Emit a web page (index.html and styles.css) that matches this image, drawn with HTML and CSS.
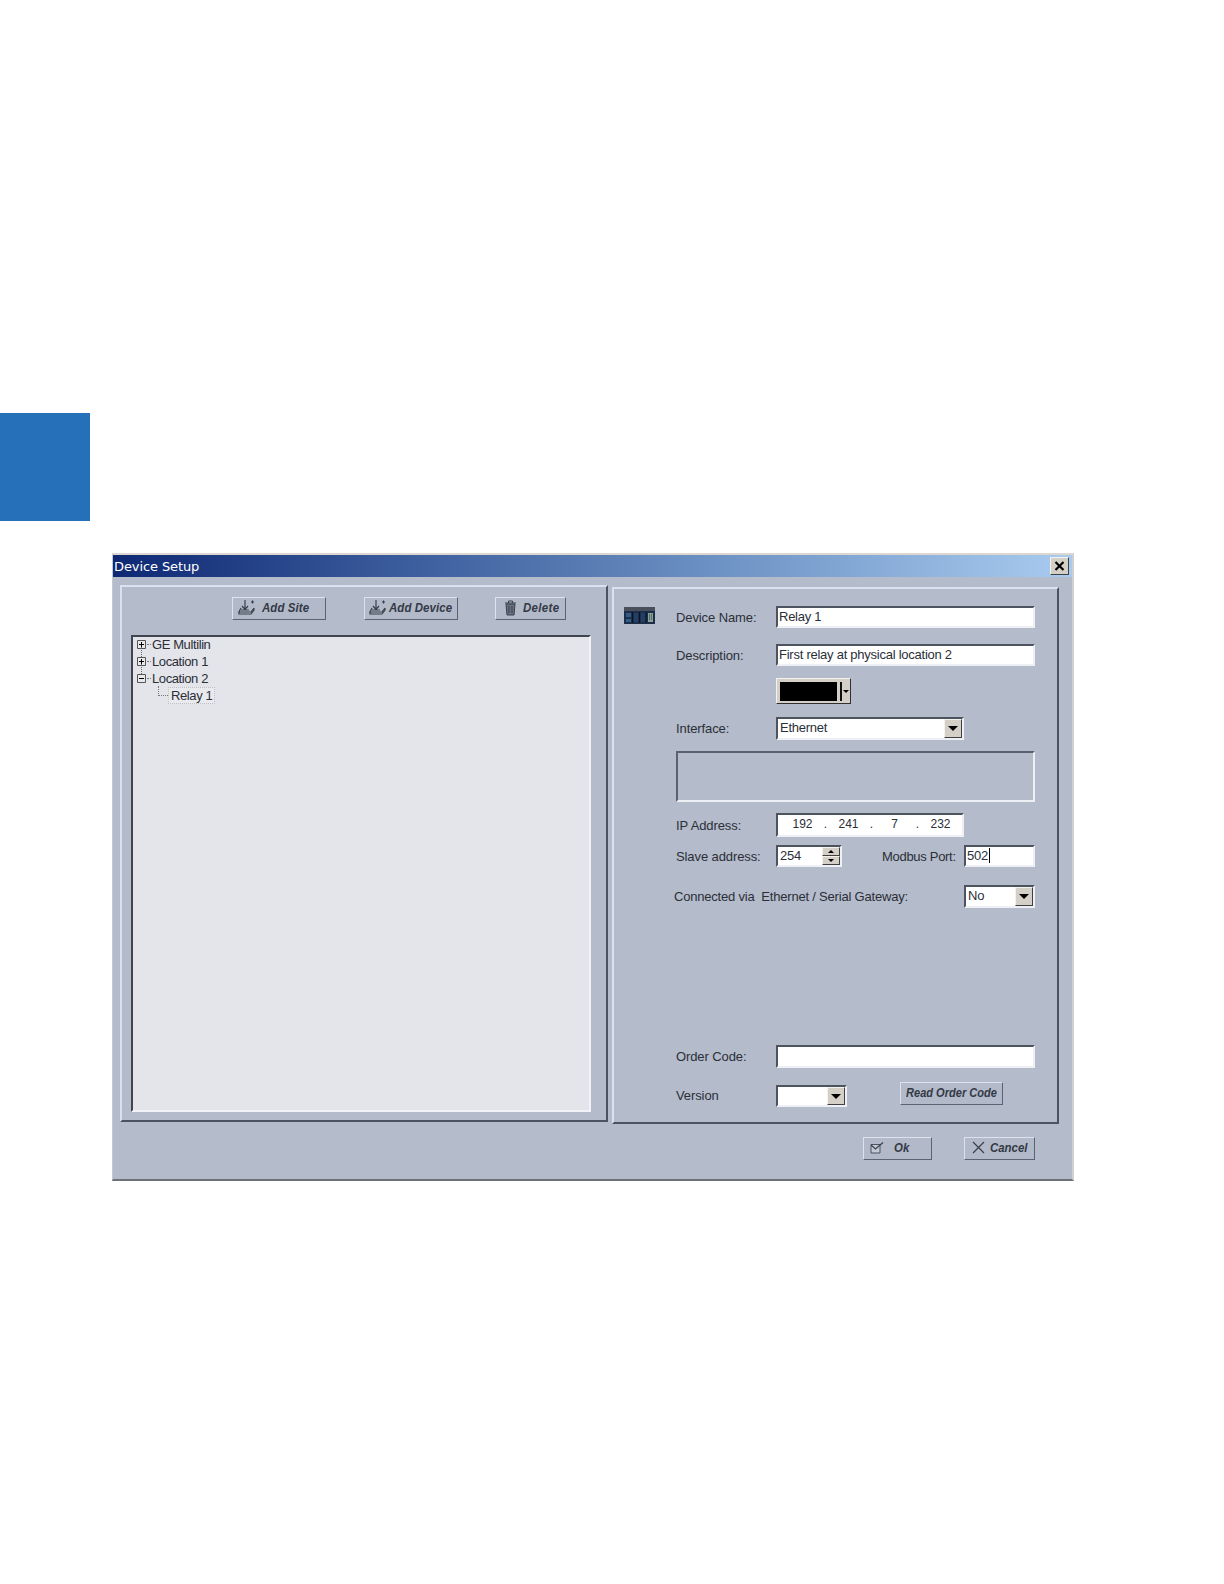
FILE: index.html
```html
<!DOCTYPE html>
<html lang="en">
<head>
<meta charset="utf-8">
<title>Device Setup</title>
<link rel="stylesheet" href="styles.css">
</head>
<body>
<div class="tab"></div>
<div class="window">
  <div class="titlebar">
    <span class="title">Device Setup</span>
    <span class="close"><svg width="11" height="10" viewBox="0 0 11 10"><path d="M1.500 1 L9.500 9 M9.500 1 L1.500 9" stroke="#000" stroke-width="2.200" fill="none"/></svg></span>
  </div>
  <div class="panels">
    <div class="panel left">
      <div class="toolbar">
        <button class="btn site"><svg class="ico" width="18" height="17" viewBox="0 0 18 17"><path d="M7 1V10M4 7L7 10.500L10 7M3 9L1 13H13L16 9M1 13V15H13L16 11V9M3 11H11M13 3H16M14.500 1.500V4.500" stroke="#39404c" stroke-width="1.200" fill="none"/></svg><span>Add Site</span></button>
        <button class="btn device"><svg class="ico" width="18" height="17" viewBox="0 0 18 17"><path d="M7 1V10M4 7L7 10.500L10 7M3 9L1 13H13L16 9M1 13V15H13L16 11V9M3 11H11M13 3H16M14.500 1.500V4.500" stroke="#39404c" stroke-width="1.200" fill="none"/></svg><span>Add Device</span></button>
        <button class="btn delete"><svg class="ico" width="13" height="16" viewBox="0 0 13 16"><path d="M2 4H11L10 15H3Z" fill="#6a7280" stroke="#39404c"/><path d="M1 3H12M4.500 3V1H8.500V3M5 6V13M8 6V13" stroke="#39404c" fill="none"/></svg><span>Delete</span></button>
      </div>
      <div class="tree">
        <div class="node first"><svg class="box" width="9" height="9" viewBox="0 0 9 9"><path d="M.5 .5H8.500V8.500H.5Z" fill="#e8e9ed" stroke="#555"/><path d="M2 4.500H7M4.500 2V7" stroke="#000"/></svg><i class="dots"></i><span>GE Multilin</span></div>
        <div class="node"><svg class="box" width="9" height="9" viewBox="0 0 9 9"><path d="M.5 .5H8.500V8.500H.5Z" fill="#e8e9ed" stroke="#555"/><path d="M2 4.500H7M4.500 2V7" stroke="#000"/></svg><i class="dots"></i><span>Location 1</span></div>
        <div class="node"><svg class="box" width="9" height="9" viewBox="0 0 9 9"><path d="M.5 .5H8.500V8.500H.5Z" fill="#e8e9ed" stroke="#555"/><path d="M2 4.500H7" stroke="#000"/></svg><i class="dots"></i><span>Location 2</span></div>
        <div class="leaf"><i class="elbow"></i><span class="selected">Relay 1</span></div>
      </div>
    </div>
    <div class="panel right">
      <div class="icon-col">
        <svg width="31" height="17" viewBox="0 0 31 17"><rect x="0" y="0" width="31" height="4" fill="#4a4f5b"/><rect x="0" y="4" width="31" height="13" fill="#1c2e4a"/><path d="M8.500 5V16M15.500 5V16M22 5V16" stroke="#0b1424"/><rect x="2" y="6" width="5" height="4" fill="#2f5c88"/><rect x="2" y="12" width="5" height="3" fill="#2f5c88"/><rect x="10" y="6" width="4" height="9" fill="#243f66"/><rect x="17" y="6" width="4" height="9" fill="#243f66"/><rect x="24" y="6" width="5" height="9" fill="#8aa596"/><path d="M25 8H28M25 10H28M25 12H28" stroke="#24323a" stroke-dasharray="1 1"/></svg>
      </div>
      <div class="form">
        <div class="row r-name"><label class="label">Device Name:</label><div class="field wide">Relay 1</div></div>
        <div class="row r-desc"><label class="label">Description:</label><div class="field wide">First relay at physical location 2</div></div>
        <div class="row r-color"><span class="label"></span><div class="colorpick"><span class="swatch"></span><span class="bar"></span><span class="tri small"></span></div></div>
        <div class="row r-iface"><label class="label">Interface:</label><div class="field combo iface"><span>Ethernet</span><span class="drop"><span class="tri"></span></span></div></div>
        <div class="group"></div>
        <div class="row r-ip"><label class="label">IP Address:</label><div class="field ip"><span>192</span><span>.</span><span>241</span><span>.</span><span>7</span><span>.</span><span>232</span></div></div>
        <div class="row r-slave"><label class="label">Slave address:</label><div class="field combo slave"><span>254</span><span class="spin"><span class="spinbtn"><span class="tri up"></span></span><span class="spinbtn"><span class="tri small"></span></span></span></div><label class="label port">Modbus Port:</label><div class="field short"><span class="caret">502</span></div></div>
        <div class="row r-gw"><label class="label gw">Connected via&nbsp; Ethernet / Serial Gateway:</label><div class="field combo short"><span>No</span><span class="drop"><span class="tri"></span></span></div></div>
        <div class="row r-order"><label class="label">Order Code:</label><div class="field wide"></div></div>
        <div class="row r-version"><label class="label">Version</label><div class="field combo version"><span></span><span class="drop"><span class="tri"></span></span></div><button class="btn read"><span>Read Order Code</span></button></div>
      </div>
    </div>
  </div>
  <div class="footer">
    <button class="btn ok"><svg class="ico" width="14" height="12" viewBox="0 0 14 12"><path d="M1 2.500H10V11H1Z" fill="#c3c9d5" stroke="#4d5463"/><path d="M1 3L5.500 7L13 .5" stroke="#39404c" stroke-width="1.200" fill="none"/></svg><span>Ok</span></button>
    <button class="btn cancel"><svg class="ico" width="13" height="13" viewBox="0 0 13 13"><path d="M1 1L12 12M12 1L1 12" stroke="#39404c" stroke-width="1.200" fill="none"/></svg><span>Cancel</span></button>
  </div>
</div>
</body>
</html>
```

FILE: styles.css
```css
* { box-sizing: border-box; }
html, body { margin: 0; padding: 0; background: #fff; }
body { width: 1224px; height: 1584px; overflow: hidden; font-family: "Liberation Sans", Arial, sans-serif; }

.tab { width: 90px; height: 108px; margin-top: 413px; background: #2570b9; }

.window {
  width: 962px; height: 628px; margin: 32px 0 0 112px;
  background: #b4bbca;
  border-top: 2px solid #dcd8d0;
  border-left: 1px solid #c4c8d0;
  border-right: 2px solid #d0d0d4;
  border-bottom: 2px solid #6f7278;
}

.titlebar {
  height: 22px; display: flex; align-items: center; justify-content: space-between;
  padding: 0 3px 0 1px;
  background: linear-gradient(90deg, #0e2874 0%, #3b5c9c 30%, #7095c6 65%, #a9cbf0 100%);
}
.title { font: 13px "DejaVu Sans", sans-serif; color: #fff; letter-spacing: -0.1px; }
.close {
  width: 19px; height: 18px; display: flex; align-items: center; justify-content: center;
  background: #d4d0c8;
  border: 1px solid; border-color: #f4f2ee #404040 #404040 #f4f2ee;
}

.panels { display: flex; height: 539px; margin-top: 8px; padding-left: 7px; }
.panel {
  border: 2px solid; border-color: #dbe2ef #4b5262 #4b5262 #dbe2ef;
}
.left { width: 488px; height: 537px; }
.right { width: 447px; height: 537px; margin: 2px 0 0 4px; display: flex; }

.toolbar { display: flex; padding: 10px 0 0 110px; }
.btn {
  display: flex; align-items: center; height: 23px; padding: 0 0 2px; margin: 0;
  background: #b2b9c9; color: #343a46;
  border: 1px solid; border-color: #dde2ec #5a6374 #5a6374 #dde2ec;
  font: italic bold 13px "Liberation Sans", sans-serif;
  white-space: nowrap;
}
.btn span { display: inline-block; transform: scaleX(.88); transform-origin: left center; letter-spacing: 0.1px; }
.ico { flex: none; }
.site { width: 94px; padding-left: 5px; }
.site span { margin-left: 6px; }
.device { width: 94px; margin-left: 38px; padding-left: 4px; }
.device span { margin-left: 2px; }
.delete { width: 71px; margin-left: 37px; padding-left: 8px; }
.delete span { margin-left: 6px; letter-spacing: 0.4px; }

.tree {
  width: 460px; height: 477px; margin: 15px 0 0 9px;
  background: #e3e5ea;
  border: 2px solid; border-color: #40454f #f2f3f6 #f2f3f6 #40454f;
  font-size: 13px; color: #2b2f38; letter-spacing: -0.4px; white-space: nowrap;
}
.node { position: relative; display: flex; align-items: center; height: 17px; padding-left: 4px; }
.first { margin-top: -1px; }
.node:not(.first)::before {
  content: ""; position: absolute; left: 8px; top: -6px; height: 10px;
  border-left: 1px dotted #666;
}
.box { flex: none; position: relative; }
.dots { width: 4px; margin: 0 1px; border-top: 1px dotted #777; }
.leaf { display: flex; align-items: center; height: 17px; padding-left: 25px; }
.elbow { width: 10px; height: 10px; margin-bottom: 9px; border-left: 1px dotted #777; border-bottom: 1px dotted #777; }
.selected { padding: 0 2px; height: 17px; line-height: 15px; width: 47px; border: 1px dotted #bdbfc5; background: #e9eaee; }

.icon-col { width: 62px; padding: 18px 0 0 10px; }
.form { width: 359px; display: flex; flex-direction: column; padding-top: 17px; font-size: 13px; color: #2b2f38; }

.row { display: flex; align-items: center; flex: none; }
.label { flex: none; width: 100px; letter-spacing: -0.1px; }
.r-name { height: 22px; }
.r-desc { height: 22px; margin-top: 16px; }
.r-color { height: 26px; margin-top: 12px; }
.r-iface { height: 23px; margin-top: 13px; }
.group {
  flex: none; height: 51px; margin-top: 11px;
  border: 2px solid; border-color: #5b616e #eef0f5 #eef0f5 #5b616e;
}
.r-ip { height: 24px; margin-top: 11px; }
.r-slave { height: 22px; margin-top: 8px; }
.r-gw { height: 23px; margin-top: 18px; }
.r-gw .label { width: 290px; margin-left: -2px; letter-spacing: -0.2px; }
.r-order { height: 23px; margin-top: auto; }
.r-version { height: 24px; margin: 17px 0 13px; align-items: flex-start; }

.field {
  flex: none; height: 100%; display: flex; align-items: center; padding: 0 0 2px 1px;
  background: #fff; color: #2b2f38; font-size: 13px; letter-spacing: -0.25px;
  border: 2px solid; border-color: #4d535f #eef0f5 #eef0f5 #4d535f;
}
.wide { width: 259px; }
.iface { width: 188px; }
.short { width: 71px; }
.slave { width: 66px; }
.version { width: 71px; height: 22px; }
.combo { justify-content: space-between; padding: 0 0 0 2px; }
.combo > span:first-child { padding-bottom: 2px; }
.ip { width: 188px; display: grid; grid-template-columns: repeat(7, 23px); padding-left: 13px; font-size: 12px; text-align: center; letter-spacing: 0; }
.port { width: 81px; margin-left: 40px; margin-right: 1px; letter-spacing: -0.3px; }
.caret { padding-right: 1px; border-right: 1px solid #000; line-height: 15px; }

.drop {
  flex: none; width: 18px; height: 100%; display: flex; align-items: center; justify-content: center;
  background: #d4d0c8; border: 1px solid; border-color: #f4f2ee #404040 #404040 #f4f2ee;
}
.tri { width: 0; height: 0; border: 5px solid transparent; border-top: 5px solid #000; border-bottom: 0; }
.tri.small { border-width: 3px 3px 0; border-top-color: #000; }
.tri.up { border-width: 0 3px 3px; border-bottom: 3px solid #000; border-top: 0; }

.spin { flex: none; width: 18px; height: 100%; display: flex; flex-direction: column; }
.spinbtn {
  flex: 1; display: flex; align-items: center; justify-content: center;
  background: #d4d0c8; border: 1px solid; border-color: #f4f2ee #404040 #404040 #f4f2ee;
}

.colorpick {
  width: 75px; height: 26px; display: flex; align-items: center; padding: 0 0 0 3px;
  background: #d4d0c8; border: 1px solid; border-color: #f4f2ee #303030 #303030 #f4f2ee;
}
.swatch { flex: none; width: 57px; height: 19px; background: #000; }
.bar { flex: none; width: 2px; height: 19px; margin: 0 1px 0 3px; background: #111; }

.read { width: 103px; margin: -3px 0 0 53px; justify-content: center; }
.read span { transform: scaleX(.85); transform-origin: center; letter-spacing: 0; }
.r-version .label { padding-top: 3px; }

.footer { display: flex; justify-content: flex-end; padding: 13px 37px 0 0; }
.ok { width: 69px; padding-left: 6px; }
.ok span { margin-left: 10px; }
.cancel { width: 71px; margin-left: 32px; padding-left: 7px; }
.cancel span { margin-left: 5px; letter-spacing: 0; }
```
